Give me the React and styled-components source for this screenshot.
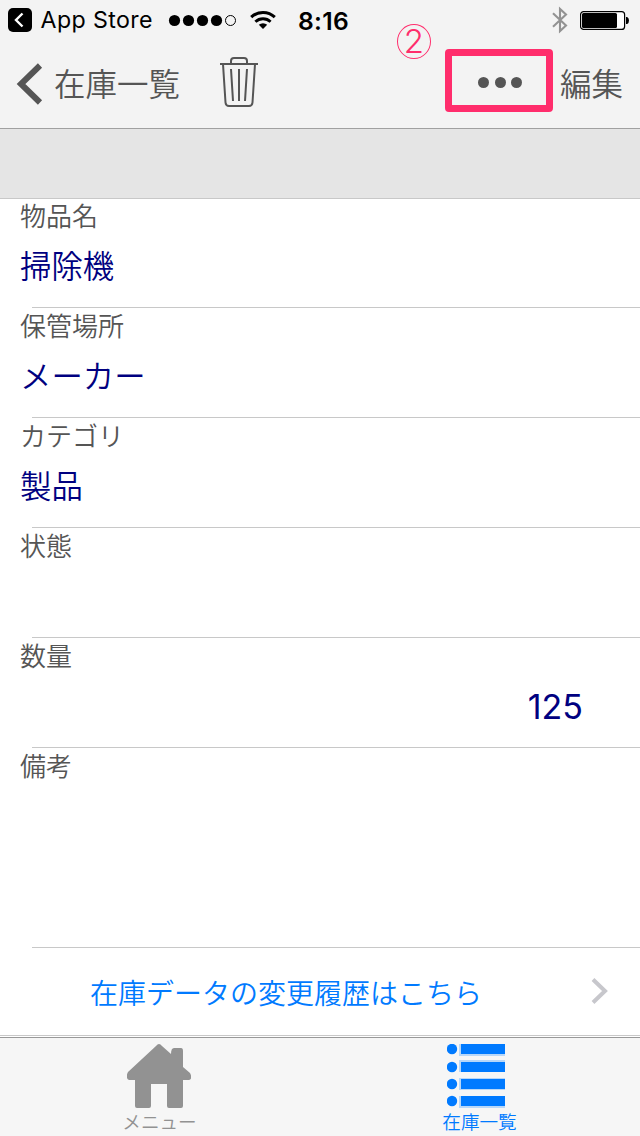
import React from "react";
import styled, { createGlobalStyle } from "styled-components";

const Global = createGlobalStyle`
  * { box-sizing: border-box; }
  body { margin: 0; background: #fff; }
`;

const Screen = styled.div`
  display: flex;
  flex-direction: column;
  width: 640px;
  height: 1136px;
  overflow: hidden;
  background: #fff;
  font-family: Inter, "Noto Sans CJK JP", sans-serif;
  font-weight: 350;
  & > * { flex-shrink: 0; }
`;

const Header = styled.header`
  position: relative;
  height: 129px;
  background: #f3f3f3;
  border-bottom: 1px solid #a0a0a0;
`;

const StatusBar = styled.div`
  display: flex;
  align-items: center;
  height: 40px;
  padding: 0 11px 0 8px;
  color: #000;
  svg { display: block; }
`;

const AppName = styled.span`
  width: 136px;
  padding: 0 0 0 8.5px;
  font-size: 23.2px;
  font-weight: 400;
  letter-spacing: 0.4px;
  line-height: 40px;
  white-space: nowrap;
`;

const Clock = styled.span`
  flex: 1;
  padding: 1px 0 0 22px;
  font-size: 24.6px;
  font-weight: 600;
  letter-spacing: 0.3px;
  line-height: 40px;
`;

const StatusIcons = styled.div`
  display: flex;
  align-items: center;
  gap: ${(p) => p.$gap}px;
`;

const NavBar = styled.nav`
  display: flex;
  align-items: center;
  height: 88px;
  padding: 0 17px 0 16px;
  color: #555;
  svg { display: block; }
`;

const NavText = styled.span`
  font-family: "Noto Sans CJK JP", sans-serif;
  font-size: 31.5px;
  line-height: 40px;
  white-space: nowrap;
  padding-bottom: 4px;
  margin-left: ${(p) => p.$gap}px;
`;

const TrashButton = styled.div`
  flex: 1;
  padding: 0 0 5px 40px;
`;

const MoreButton = styled.div`
  display: flex;
  align-items: center;
  justify-content: center;
  gap: 5.5px;
  width: 108px;
  height: 63px;
  margin-top: -7px;
  padding: 3px 0 0 3px;
  border: 7px solid #ff2d6c;
  border-radius: 4px;
`;

const MoreDot = styled.i`
  width: 11px;
  height: 11px;
  border-radius: 50%;
  background: #555;
`;

const StepMark = styled.span`
  position: absolute;
  left: 397px;
  top: 24px;
  width: 34px;
  height: 35px;
  border: 1px solid #ff2d6c;
  border-radius: 50%;
  color: #ff2d6c;
  font-size: 33px;
  font-weight: 300;
  line-height: 32px;
  text-align: center;
`;

const Band = styled.div`
  height: 70px;
  background: #e5e5e5;
  border-bottom: 1px solid #c8c8c8;
`;

const Row = styled.section`
  position: relative;
  height: ${(p) => p.$height}px;
  padding: ${(p) => (p.$height > 109 ? 1 : 0)}px 57px 0 20px;
  &::after {
    content: "";
    position: absolute;
    left: 32px;
    right: 0;
    bottom: 0;
    height: 1px;
    background: #c8c8c8;
  }
`;

const Label = styled.div`
  font-family: "Noto Sans CJK JP", sans-serif;
  font-size: 26px;
  line-height: 32px;
  color: #555;
`;

const Value = styled.div`
  margin-top: ${(p) => (p.$number ? 17 : 15)}px;
  font-family: ${(p) => (p.$number ? "Inter" : '"Noto Sans CJK JP"')}, sans-serif;
  font-size: ${(p) => (p.$number ? 34 : 31.4)}px;
  font-weight: ${(p) => (p.$number ? 400 : 350)};
  line-height: 38px;
  text-align: ${(p) => (p.$number ? "right" : "left")};
  color: #000080;
`;

const LinkRow = styled.a`
  display: flex;
  align-items: center;
  justify-content: space-between;
  height: 88px;
  padding: 0 32px 0 90px;
  border-bottom: 1px solid #c8c8c8;
  font-family: "Noto Sans CJK JP", sans-serif;
  font-size: 28px;
  line-height: 40px;
  color: #007aff;
  svg { margin-top: -2px; }
`;

const TabBar = styled.footer`
  display: flex;
  height: 99px;
  margin-top: 1px;
  border-top: 1px solid #999;
  background: #f6f6f6;
`;

const Tab = styled.div`
  display: flex;
  flex: 1;
  flex-direction: column;
  align-items: center;
  padding: 6px 2px 0 0;
  color: ${(p) => (p.$active ? "#007aff" : "#929292")};
  font-family: "Noto Sans CJK JP", sans-serif;
  font-size: 18.6px;
  line-height: 24px;
  svg { display: block; }
  span { margin-top: 1px; padding-left: 1px; }
`;

const fields = [
  { label: "物品名", value: "掃除機", height: 109 },
  { label: "保管場所", value: "メーカー", height: 110 },
  { label: "カテゴリ", value: "製品", height: 110 },
  { label: "状態", value: "", height: 110 },
  { label: "数量", value: "125", number: true, height: 110 },
  { label: "備考", value: "", height: 200 },
];

const BackToApp = () => (
  <svg width="24" height="24" viewBox="0 0 24 24">
    <rect width="24" height="24" rx="5" fill="#000" />
    <path d="M14.5 5.5 8 12l6.5 6.5" fill="none" stroke="#fff" strokeWidth="2.4" />
  </svg>
);

const Signal = () => (
  <svg width="70" height="14" viewBox="0 0 70 14">
    {[6.5, 20.5, 34.5, 48.5].map((x) => (
      <circle key={x} cx={x} cy="7.5" r="5.6" />
    ))}
    <circle cx="62.5" cy="7.5" r="5" fill="none" stroke="#000" />
  </svg>
);

const Wifi = () => (
  <svg width="26" height="20" viewBox="0 0 26 20">
    <path d="M1.2 7.2a17 17 0 0 1 23.6 0" fill="none" stroke="#000" strokeWidth="3" />
    <path d="M5.4 11.8a11 11 0 0 1 15.2 0" fill="none" stroke="#000" strokeWidth="2.8" />
    <path d="M13 19 8.8 14.8a6.4 6.4 0 0 1 8.4 0z" />
  </svg>
);

const Bluetooth = () => (
  <svg width="18" height="28" viewBox="0 0 18 28">
    <path d="M2 7.2 15 19.5 9 25V3l6 5.5L2 20.8" fill="none" stroke="#929292" strokeWidth="2.1" />
  </svg>
);

const Battery = () => (
  <svg width="49" height="19" viewBox="0 0 49 19">
    <rect x="0.6" y="0.6" width="44" height="17.8" rx="3" fill="#fff" stroke="#000" strokeWidth="1.2" />
    <rect x="2" y="2" width="35" height="15" rx="1.5" />
    <path d="M46 6h1.2q1.8 1 1.8 3.5T47.2 13H46z" />
  </svg>
);

const Trash = () => (
  <svg width="38" height="50" viewBox="0 0 38 50" fill="none" stroke="#555" strokeWidth="2">
    <path d="M0 7h38M11 7V4q0-3 3-3h10q3 0 3 3v3M3 7l2.5 38.5q.3 3.5 3.5 3.5h20q3.2 0 3.5-3.5L35 7M11 12l2 32M19 12v32M27 12l-2 32" />
  </svg>
);

const Home = () => (
  <svg width="64" height="64" viewBox="0 0 64 64" fill="currentColor">
    <path d="M29 2q3-4 6 0l9 8q0-6 3-6h7q2 0 2 3v16l7 6q3 6-1 7h-6v26q0 2-2 2H42q-2 0-2-2V40H24v22q0 2-2 2H10q-2 0-2-2V36H2q-4-2-1-8z" />
  </svg>
);

const ListIcon = () => (
  <svg width="64" height="64" viewBox="0 0 64 64" fill="currentColor">
    {[
      { y: 0, haloY: 0 },
      { y: 18, haloY: 16 },
      { y: 35, haloY: 34 },
      { y: 52, haloY: 52 },
    ].map(({ y, haloY }) => (
      <g key={y}>
        <circle cx="5" cy={y + 5} r="5.2" />
        <rect x="12" y={haloY} width="46" height="12" fillOpacity="0.25" />
        <rect x="14" y={y} width="44" height="10" />
      </g>
    ))}
  </svg>
);

export default function App() {
  return (
    <Screen>
      <Global />
      <Header>
        <StatusBar>
          <BackToApp />
          <AppName>App Store</AppName>
          <StatusIcons $gap={12}>
            <Signal />
            <Wifi />
          </StatusIcons>
          <Clock>8:16</Clock>
          <StatusIcons $gap={11}>
            <Bluetooth />
            <Battery />
          </StatusIcons>
        </StatusBar>
        <NavBar>
          <svg width="27" height="42" viewBox="0 0 27 42">
            <path d="M24 2.5 5 21l19 18.5" fill="none" stroke="#555" strokeWidth="6" />
          </svg>
          <NavText $gap={11}>在庫一覧</NavText>
          <TrashButton>
            <Trash />
          </TrashButton>
          <MoreButton>
            <MoreDot />
            <MoreDot />
            <MoreDot />
          </MoreButton>
          <NavText $gap={7}>編集</NavText>
        </NavBar>
        <StepMark>2</StepMark>
      </Header>
      <Band />
      {fields.map((f) => (
        <Row key={f.label} $height={f.height}>
          <Label>{f.label}</Label>
          {f.value && <Value $number={f.number}>{f.value}</Value>}
        </Row>
      ))}
      <LinkRow>
        在庫データの変更履歴はこちら
        <svg width="17" height="26" viewBox="0 0 17 26">
          <path d="M2 1.5 14 13 2 24.5" fill="none" stroke="#c7c7cc" strokeWidth="4" />
        </svg>
      </LinkRow>
      <TabBar>
        <Tab>
          <Home />
          <span>メニュー</span>
        </Tab>
        <Tab $active>
          <ListIcon />
          <span>在庫一覧</span>
        </Tab>
      </TabBar>
    </Screen>
  );
}
